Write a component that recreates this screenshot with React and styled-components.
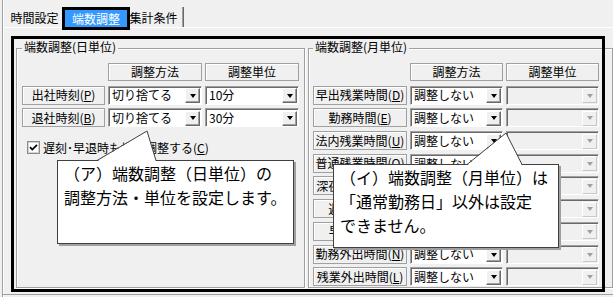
import React from 'react';
import styled, { createGlobalStyle } from 'styled-components';

const GlobalStyle = createGlobalStyle`
  html, body {
    margin: 0;
    padding: 0;
    background: #f0f0f0;
  }
  body {
    font-family: "Noto Sans CJK JP", "Liberation Sans", sans-serif;
  }
`;

const DAY_ROWS = [
  { label: '出社時刻', key: 'P', method: '切り捨てる', unit: '10分' },
  { label: '退社時刻', key: 'B', method: '切り捨てる', unit: '30分' },
];

const MONTH_ROWS = [
  { label: '早出残業時間', key: 'D' },
  { label: '勤務時間', key: 'E' },
  { label: '法内残業時間', key: 'U' },
  { label: '普通残業時間', key: 'O' },
  { label: '深夜残業時間', key: 'S' },
  { label: '遅刻時間', key: 'T' },
  { label: '早退時間', key: 'Y' },
  { label: '勤務外出時間', key: 'N' },
  { label: '残業外出時間', key: 'L' },
];

function Label({ text, hotkey }) {
  return (
    <LabelCell>
      {text}(<u>{hotkey}</u>)
    </LabelCell>
  );
}

function Combo({ value, disabled }) {
  return (
    <Select disabled={disabled}>
      <SelectText>{value}</SelectText>
      <DropButton disabled={disabled}>
        <Arrow disabled={disabled} />
      </DropButton>
    </Select>
  );
}

function Callout({ x, y, w, h, tip, base, children }) {
  const [tx, ty] = tip;
  const [bl, br] = base;
  return (
    <CalloutBox style={{ left: x, top: y, width: w, height: h }}>
      <Pointer width={w} height={42}>
        <polygon points={`${bl},41.5 ${tx},${40 + ty} ${br},41.5`} fill="#fff" />
        <polyline
          points={`${bl},40.5 ${tx},${40 + ty} ${br},40.5`}
          fill="none"
          stroke="#404040"
          strokeWidth="1"
        />
      </Pointer>
      {children}
    </CalloutBox>
  );
}

export default function App() {
  return (
    <Screen>
      <GlobalStyle />
      <Window>
        <TabStrip>
          <Tab w={59} padL={4}>時間設定</Tab>
          <ActiveTab>端数調整</ActiveTab>
          <Tab w={54} padR={6} last>集計条件</Tab>
        </TabStrip>

        <Panel>
          <Group w={289} pad={5}>
            <GroupTitle left={5}>端数調整(日単位)</GroupTitle>
            <Table cols="83px 94px 94px">
              <span />
              <HeaderCell>調整方法</HeaderCell>
              <HeaderCell>調整単位</HeaderCell>
              {DAY_ROWS.map(row => (
                <React.Fragment key={row.key}>
                  <Label text={row.label} hotkey={row.key} />
                  <Combo value={row.method} />
                  <Combo value={row.unit} />
                </React.Fragment>
              ))}
            </Table>
            <CheckRow>
              <svg width="13" height="13" viewBox="0 0 13 13">
                <rect x="0.5" y="0.5" width="12" height="12" fill="#fff" stroke="#8a8a8a" />
                <rect x="1.5" y="1.5" width="10" height="10" fill="none" stroke="#d4d4d4" />
                <path d="M3 6.2 L5.3 8.6 L10 3.8" fill="none" stroke="#000" strokeWidth="1.7" />
              </svg>
              <span>
                遅刻･早退時も端数調整する(<u>C</u>)
              </span>
            </CheckRow>
          </Group>

          <Group w={305} pad={4}>
            <GroupTitle left={4}>端数調整(月単位)</GroupTitle>
            <Table cols="94px 93px 93px">
              <span />
              <HeaderCell>調整方法</HeaderCell>
              <HeaderCell>調整単位</HeaderCell>
              {MONTH_ROWS.map(row => (
                <React.Fragment key={row.key}>
                  <Label text={row.label} hotkey={row.key} />
                  <Combo value="調整しない" />
                  <Combo value="" disabled />
                </React.Fragment>
              ))}
            </Table>
          </Group>
        </Panel>
      </Window>

      <Highlight />

      <Callout x={57} y={160} w={237} h={84} tip={[90, -29]} base={[40, 99]}>
        （ア）端数調整（日単位）の
        <br />
        調整方法・単位を設定します。
      </Callout>

      <Callout x={333} y={164} w={226} h={84} tip={[173, -31]} base={[134, 189]}>
        （イ）端数調整（月単位）は
        <br />
        「通常勤務日」以外は設定
        <br />
        できません。
      </Callout>
    </Screen>
  );
}

const Screen = styled.div`
  position: relative;
  width: 613px;
  height: 297px;
  overflow: hidden;
  background: #f0f0f0;
  color: #000;
  font-size: 12px;
`;

const Window = styled.div`
  margin-left: 2px;
  height: 100%;
  border-left: 1px solid #a0a0a0;
  box-shadow: inset 1px 0 0 #fff;
`;

const TabStrip = styled.div`
  position: relative;
  z-index: 2;
  display: flex;
  align-items: flex-end;
  height: 27px;
`;

const Tab = styled.div`
  box-sizing: border-box;
  display: flex;
  align-items: center;
  justify-content: center;
  width: ${props => props.w}px;
  height: 20px;
  padding-left: ${props => props.padL || 0}px;
  padding-right: ${props => props.padR || 0}px;
  white-space: nowrap;
  ${props =>
    props.last &&
    `
    border-right: 1px solid #696969;
    box-shadow: inset -1px 0 0 #a0a0a0;
  `}
`;

const ActiveTab = styled.div`
  box-sizing: border-box;
  display: flex;
  align-items: center;
  justify-content: center;
  width: 68px;
  height: 23px;
  margin-bottom: -3px;
  border: 3px solid #000;
  background: #3399ff;
  color: #fff;
  white-space: nowrap;
`;

const Panel = styled.div`
  box-sizing: border-box;
  display: flex;
  gap: 3px;
  height: 268px;
  padding: 20px 0 0 13px;
  border-top: 1px solid #fff;
  border-bottom: 1px solid #a0a0a0;
`;

const Group = styled.div`
  position: relative;
  flex: none;
  box-sizing: border-box;
  width: ${props => props.w}px;
  height: 240px;
  padding: 14px 0 0 ${props => props.pad}px;
  border: 1px solid #a0a0a0;
  box-shadow: inset 1px 1px 0 #fff, 1px 1px 0 #fff;
`;

const GroupTitle = styled.div`
  position: absolute;
  top: -10px;
  left: ${props => props.left}px;
  padding: 0 2px;
  line-height: 16px;
  background: #f0f0f0;
  white-space: nowrap;
`;

const Table = styled.div`
  display: grid;
  grid-template-columns: ${props => props.cols};
  grid-auto-rows: 19px;
  column-gap: 3px;
  row-gap: 3.7px;
`;

const LabelCell = styled.div`
  box-sizing: border-box;
  display: flex;
  align-items: center;
  justify-content: center;
  height: 19px;
  border: 1px solid #a0a0a0;
  box-shadow: inset 1px 1px 0 #fff;
  white-space: nowrap;
  overflow: hidden;
  line-height: 1;
`;

const HeaderCell = styled(LabelCell)`
  height: 18px;
`;

const Select = styled.div`
  box-sizing: border-box;
  display: flex;
  align-items: center;
  height: 19px;
  padding: 1px 1px 0 3px;
  border: 1px solid;
  border-color: #a0a0a0 #fff #fff #a0a0a0;
  box-shadow: inset 1px 1px 0 #696969;
  background: ${props => (props.disabled ? '#f0f0f0' : '#fff')};
`;

const SelectText = styled.span`
  flex: 1;
  overflow: hidden;
  white-space: nowrap;
  line-height: 1.2;
`;

const DropButton = styled.div`
  box-sizing: border-box;
  display: flex;
  align-items: center;
  justify-content: center;
  width: 15px;
  height: 15px;
  background: #f0f0f0;
  border: 1px solid;
  border-color: ${props =>
    props.disabled ? '#fff #c8c8c8 #c8c8c8 #fff' : '#fff #696969 #696969 #fff'};
  box-shadow: ${props => (props.disabled ? 'none' : 'inset -1px -1px 0 #a0a0a0')};
`;

const Arrow = styled.span`
  width: 0;
  height: 0;
  border-left: 3.5px solid transparent;
  border-right: 3.5px solid transparent;
  border-top: 4px solid ${props => (props.disabled ? '#a0a0a0' : '#000')};
`;

const CheckRow = styled.div`
  display: flex;
  align-items: center;
  gap: 3px;
  height: 16px;
  margin: 12px 0 0 5px;
  white-space: nowrap;
`;

const Highlight = styled.div`
  position: absolute;
  left: 11px;
  top: 36px;
  width: 594px;
  height: 256px;
  box-sizing: border-box;
  border: 3px solid #000;
  pointer-events: none;
  z-index: 3;
`;

const CalloutBox = styled.div`
  position: absolute;
  z-index: 4;
  box-sizing: border-box;
  padding-left: 6px;
  background: #fff;
  border: 1px solid #404040;
  box-shadow: 2px 2px 0 #a0a0a0;
  font-size: 16px;
  line-height: 24px;
  white-space: nowrap;
`;

const Pointer = styled.svg`
  position: absolute;
  left: -1px;
  top: -41px;
  overflow: visible;
`;
